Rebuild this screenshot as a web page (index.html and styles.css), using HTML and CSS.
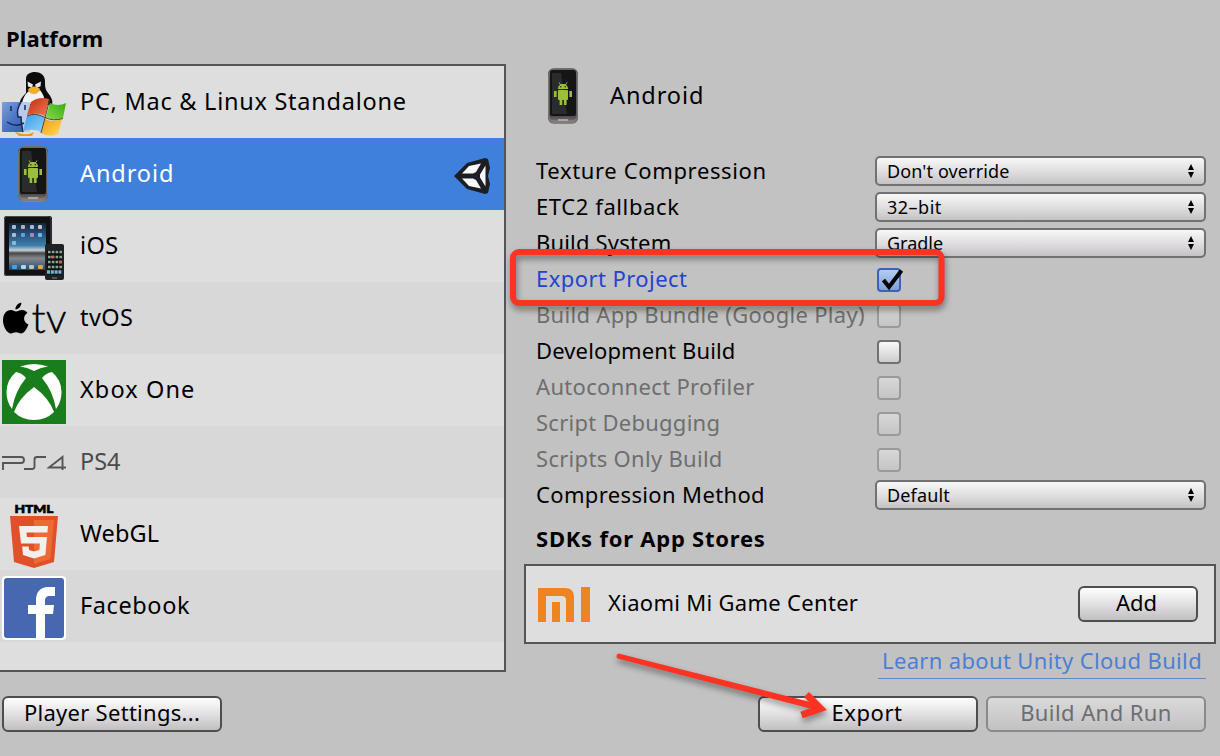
FILE: index.html
```html
<!DOCTYPE html>
<html lang="en">
<head>
<meta charset="utf-8">
<title>Build Settings</title>
<link rel="stylesheet" href="styles.css">
</head>
<body>
<svg class="defs" width="0" height="0" aria-hidden="true">
  <defs>
    <linearGradient id="gFace" x1="0" y1="0" x2="1" y2="1"><stop offset="0" stop-color="#7d9fdc"/><stop offset=".5" stop-color="#4a74c4"/><stop offset="1" stop-color="#2f57a8"/></linearGradient>
    <linearGradient id="gRed" x1="0" y1="0" x2="1" y2="1"><stop offset="0" stop-color="#c02e10"/><stop offset="1" stop-color="#f27a50"/></linearGradient>
    <linearGradient id="gGreen" x1="0" y1="1" x2="1" y2="0"><stop offset="0" stop-color="#86dc50"/><stop offset="1" stop-color="#38a80e"/></linearGradient>
    <linearGradient id="gBlue" x1="0" y1="0" x2="1" y2="1"><stop offset="0" stop-color="#3a9ae6"/><stop offset="1" stop-color="#8fd4fa"/></linearGradient>
    <linearGradient id="gYellow" x1="0" y1="0" x2="1" y2="1"><stop offset="0" stop-color="#f09a18"/><stop offset="1" stop-color="#ffdc58"/></linearGradient>
    <linearGradient id="gPhone" x1="0" y1="0" x2="0" y2="1"><stop offset="0" stop-color="#77716f"/><stop offset=".12" stop-color="#4a4848"/><stop offset=".85" stop-color="#4a4646"/><stop offset="1" stop-color="#8d8785"/></linearGradient>
    <linearGradient id="gPad" x1="0" y1="0" x2="0" y2="1"><stop offset="0" stop-color="#102440"/><stop offset=".48" stop-color="#3f7fae"/><stop offset=".58" stop-color="#c5d0d2"/><stop offset=".64" stop-color="#46464a"/><stop offset=".75" stop-color="#85888c"/><stop offset="1" stop-color="#26456a"/></linearGradient>
    <symbol id="phone" viewBox="0 0 64 64">
      <rect x="16" y="2" width="30" height="56" rx="6" fill="url(#gPhone)"/>
      <rect x="16.8" y="5" width="28.4" height="50" rx="5" fill="none" stroke="#8a8888" stroke-width="1"/>
      <rect x="18" y="4" width="26" height="46" rx="2.5" fill="#151516"/>
      <path d="M20 7h9l6 41H20z" fill="#2a2b2c"/>
      <path d="M26 54h10" stroke="#b8b8b8" stroke-width="1.5"/>
      <g fill="#9cbf3a">
        <path d="M26 23c0-3 2-5 5-5s5 2 5 5z"/>
        <rect x="26" y="24" width="10" height="10" rx="1"/>
        <rect x="22" y="25" width="2.6" height="6"/><rect x="37.4" y="25" width="2.6" height="6"/>
        <rect x="27.6" y="33" width="2.6" height="6"/><rect x="32" y="33" width="2.6" height="6"/>
        <path d="M27 16.5l2 3M35 16.5l-2 3" stroke="#9cbf3a" stroke-width="1"/>
      </g>
      <circle cx="28.8" cy="20.8" r=".8" fill="#222"/><circle cx="33.2" cy="20.8" r=".8" fill="#222"/>
    </symbol>
  </defs>
</svg>

<div class="window">
  <section class="platforms">
    <h2 class="title title-platform">Platform</h2>
    <ul class="list">
      <li class="row">
        <svg class="icon" viewBox="0 0 64 64">
          <path d="M24 7c0-5 4-7 9-7s10 3 10 9c0 5 0 8 3 12 4 5 5 8 4 12H18c-1-4 2-8 6-12z" fill="#0b0b0c"/>
          <path d="M27 19c3 2 8 2 11-1 3 4 5 8 5 14H20c1-6 3-10 7-13z" fill="#f1f1f3"/>
          <path d="M25.500 9.500 31 12.500l-1 3-4-1zM39 9.500 33 12.500l1 3 4.500-1z" fill="#e8e8e8"/>
          <path d="M26 18c1-4 9-5 12-1-1 4-4 5-6 5s-5-1-6-4z" fill="#efae27"/>
          <path d="M12 59q12 6 20 1l-2 4H17z" fill="#e99a20"/>
          <rect y="30" width="28" height="30" rx="1" fill="url(#gFace)"/>
          <path d="M19 30c-4 6-4 11-3 15h3c0 6 1 10 2 15h7V30z" fill="#b9caea"/>
          <path d="M19 30c-4 6-4 11-3 15h3c0 6 1 10 2 15M9 34v5M23 33v5M5 50q9 6 17 1" fill="none" stroke="#182957" stroke-width="1.500"/>
          <path d="M29 30q8-6 18-3l-4 17q-8-4-18-1z" fill="url(#gRed)"/>
          <path d="M48 31q8 4 16 0l-3 15q-8 4-17-1z" fill="url(#gGreen)"/>
          <path d="M25 44q8-4 18 1l-4 15q-8-4-18-1z" fill="url(#gBlue)"/>
          <path d="M43 47q8 4 17 0l-4 15q-8 4-17-1z" fill="url(#gYellow)"/>
          <path d="M47.500 28 43 46l-4 15M25 44q8-4 18 1.500 8 4 18 1" fill="none" stroke="#54452f" stroke-width="1"/>
        </svg>
        <span class="name n-pc">PC, Mac &amp; Linux Standalone</span>
      </li>
      <li class="row selected">
        <svg class="icon"><use href="#phone"/></svg>
        <span class="name n-android">Android</span>
        <svg class="unity" viewBox="0 0 38 38">
          <path d="M1 19 14 6 32 1l3 1 2 9-2 8 2 8-2 9-3 1-18-5z" fill="#1b1f24"/>
          <path d="M9 16.500 16 9l12-2.500-5 8.500-3 1.500zM9 21.500h11l3 1.500 5 8.500-12-2.500zM27 17.500l5.500-9v21L27 20.500z" fill="#f8f8f8"/>
        </svg>
      </li>
      <li class="row">
        <svg class="icon" viewBox="0 0 64 64">
          <rect x="2" width="48" height="60" rx="2.500" fill="#111114"/>
          <rect x="2.500" y=".5" width="46.500" height="59" rx="2.500" fill="none" stroke="#47484c"/>
          <rect x="7" y="7" width="37" height="47" fill="url(#gPad)"/>
          <g fill="#a9bccc"><rect x="10" y="9" width="4" height="4" rx="1"/><rect x="19" y="9" width="4" height="4" rx="1" fill="#c8ad9b"/><rect x="28" y="9" width="4" height="4" rx="1"/><rect x="36" y="9" width="4" height="4" rx="1" fill="#d0c3a3"/><rect x="10" y="17" width="4" height="4" rx="1"/><rect x="19" y="17" width="4" height="4" rx="1" fill="#5aa3d8"/><rect x="28" y="17" width="4" height="4" rx="1" fill="#a686b9"/><rect x="36" y="17" width="4" height="4" rx="1" fill="#68bde8"/><rect x="10" y="25" width="4" height="4" rx="1" fill="#8fb6cf"/></g>
          <g><rect x="10" y="49" width="5" height="4" rx="1" fill="#35a6ed"/><rect x="19" y="49" width="5" height="4" rx="1" fill="#9edcf4"/><rect x="27" y="49" width="5" height="4" rx="1" fill="#b8c4ac"/><rect x="36" y="49" width="5" height="4" rx="1" fill="#eda03b"/></g>
          <rect x="43" y="28" width="19" height="36" rx="2" fill="#202124"/>
          <rect x="45" y="34" width="15" height="25" fill="#111"/>
          <path d="M46 36h14M46 41h14M46 46h14M46 51h14" stroke="#87a796" stroke-width="2.600" stroke-dasharray="2.600 1.200"/>
          <path d="M49 41h3M57 46h3" stroke="#c86453" stroke-width="2.600"/>
          <path d="M45 56h15" stroke="#6eb6d8" stroke-width="3.500" stroke-dasharray="3 .8"/>
          <path d="M50 62h5" stroke="#888"/>
        </svg>
        <span class="name n-ios">iOS</span>
      </li>
      <li class="row">
        <svg class="icon" viewBox="0 0 64 64">
          <path d="M14 23.500c2 0 3-1.500 6-1.500 2.500 0 4.300 1.300 5.400 3-5 3-4 9.500 1 11.500-1.200 4-4.300 9-7.400 9-2 0-2.600-1.200-5-1.200s-3.200 1.200-5 1.200C5 45.500 1 38.500 1 32.500 1 26 4.500 22 9 22c2.200 0 3.600 1.500 5 1.500z" fill="#000"/>
          <path d="M13.500 21.500c-.3-3 2-6.200 5.800-7 .3 3.300-2.300 6.800-5.800 7z" fill="#000"/>
          <text class="tv" x="29.500" y="45" textLength="35" lengthAdjust="spacingAndGlyphs">tv</text>
        </svg>
        <span class="name n-tvos">tvOS</span>
      </li>
      <li class="row">
        <svg class="icon" viewBox="0 0 64 64">
          <rect width="64" height="64" fill="#1a7d1c"/>
          <g fill="#fff">
            <path d="M14 12Q20 13 24 18 13 31 10 49 4.500 42 4.500 32 4.500 20 14 12z"/>
            <path d="M50 12Q44 13 40 18 51 31 54 49 59.500 42 59.500 32 59.500 20 50 12z"/>
            <path d="M32 27Q47 38 52 52 44 60 32 60 20 60 12 52 17 38 32 27z"/>
            <path d="M18 6.500Q32 1.500 46 6.500 39 7 32 11 25 7 18 6.500z"/>
          </g>
        </svg>
        <span class="name n-xbox">Xbox One</span>
      </li>
      <li class="row">
        <svg class="icon" viewBox="0 0 64 64" fill="none" stroke="#555" stroke-width="1.900">
          <path d="M0 25h19q3 0 3 3t-3 3H1v7M22 37h8q2.500 0 2.500-2.500v-7Q32.500 25 35 25h9"/>
          <path d="M64 35.500H47L60.500 25v13"/>
        </svg>
        <span class="name n-ps4 dim">PS4</span>
      </li>
      <li class="row">
        <svg class="icon" viewBox="0 0 64 64">
          <text class="html" x="12.500" y="8.800" textLength="39" lengthAdjust="spacingAndGlyphs">HTML</text>
          <path d="M8 12h48l-4 46-20 6-20-6z" fill="#e0502b"/>
          <path d="M32 16h20l-3.600 39L32 60z" fill="#ee6a35"/>
          <path d="M17 22h29l-.6 6.500H24.500l.4 4.500H45l-1.600 18L32 54.500l-11-3.500-.8-8.500h6.500l.4 3.500 5 1.500 5.300-1.500.5-6.500H19z" fill="#f4efed"/>
        </svg>
        <span class="name n-webgl">WebGL</span>
      </li>
      <li class="row">
        <svg class="icon" viewBox="0 0 64 64">
          <rect width="64" height="64" rx="4" fill="#fff"/>
          <rect x="2" y="2" width="60" height="60" rx="3" fill="#4568b0"/>
          <path d="M34 62V38h-8v-9h8v-5c0-8 4.500-13 12-13h7v9h-5c-3.500 0-5 1.500-5 5v4h9l-1 9h-8v24z" fill="#fff"/>
        </svg>
        <span class="name n-facebook">Facebook</span>
      </li>
    </ul>
  </section>

  <section class="details">
    <header class="heading">
      <svg class="icon"><use href="#phone"/></svg>
      <span class="name n-android">Android</span>
    </header>
    <div class="settings">
      <span class="label l-texture">Texture Compression</span>
      <div class="popup"><span class="p-dont">Don't override</span><svg class="arrows" viewBox="0 0 8 14"><path d="M4 0 7 6H1zM4 14 1 8h6z"/></svg></div>
      <span class="label l-etc">ETC2 fallback</span>
      <div class="popup"><span class="p-bit">32–bit</span><svg class="arrows" viewBox="0 0 8 14"><path d="M4 0 7 6H1zM4 14 1 8h6z"/></svg></div>
      <span class="label l-system">Build System</span>
      <div class="popup"><span class="p-gradle">Gradle</span><svg class="arrows" viewBox="0 0 8 14"><path d="M4 0 7 6H1zM4 14 1 8h6z"/></svg></div>
      <span class="label l-export active">Export Project</span>
      <div class="check checked"><svg class="tick" viewBox="0 0 24 24"><path d="M5.500 12l5.500 7L23.500 2.500" fill="none" stroke="#000" stroke-width="4"/></svg></div>
      <span class="label l-bundle dim">Build App Bundle (Google Play)</span>
      <div class="check off"></div>
      <span class="label l-dev">Development Build</span>
      <div class="check"></div>
      <span class="label l-auto dim">Autoconnect Profiler</span>
      <div class="check off"></div>
      <span class="label l-debug dim">Script Debugging</span>
      <div class="check off"></div>
      <span class="label l-scripts dim">Scripts Only Build</span>
      <div class="check off"></div>
      <span class="label l-method">Compression Method</span>
      <div class="popup"><span class="p-default">Default</span><svg class="arrows" viewBox="0 0 8 14"><path d="M4 0 7 6H1zM4 14 1 8h6z"/></svg></div>
    </div>
    <h2 class="title title-sdk">SDKs for App Stores</h2>
    <div class="sdk">
      <svg class="mi" viewBox="0 0 52 35" fill="#ee8322"><path d="M0 1h27q9 0 9 9v25h-8V13q0-4-4-4H8v26H0zM14 15h8v20h-8zM43 0h9v35h-9z"/></svg>
      <span class="label l-xiaomi">Xiaomi Mi Game Center</span>
      <button class="button add"><span class="b-add">Add</span></button>
    </div>
    <a class="link"><span class="l-learn">Learn about Unity Cloud Build</span></a>
  </section>

  <footer class="footer">
    <button class="button player"><span class="b-player">Player Settings...</span></button>
    <button class="button export"><span class="b-export">Export</span></button>
    <button class="button disabled"><span class="b-run">Build And Run</span></button>
  </footer>

  <svg class="notes" viewBox="0 0 1220 756" fill="#fa3323" stroke="#fa3323">
    <rect x="513" y="252" width="428.500" height="51" rx="6" fill="none" stroke-width="6"/>
    <path d="M618.500 653.500 816 703.500v6.500L617.500 658.500Q615 655 618.500 653.500z" stroke="none"/>
    <path d="M806.500 694.500 820.500 708.500 801.500 715" fill="none" stroke-width="7" stroke-linejoin="miter"/>
  </svg>
</div>
</body>
</html>
```

FILE: styles.css
```css
* { box-sizing: border-box; }

body {
  margin: 0;
  background: #c2c2c2;
  color: #000;
  font-family: "Noto Sans", "Open Sans", sans-serif;
  font-size: 22px;
}

.defs { position: absolute; }

.window {
  position: relative;
  width: 1220px;
  height: 756px;
  overflow: hidden;
  display: grid;
  grid-template-columns: 506px 1fr;
  grid-template-rows: 684px 1fr;
  column-gap: 18px;
  white-space: nowrap;
}

.title {
  margin: 0;
  font-size: 22px;
  font-weight: 700;
  line-height: 30px;
}
.title-platform { padding: 23px 0 11px 6px; letter-spacing: .1px; }

.list {
  margin: 0;
  padding: 0;
  list-style: none;
  height: 608px;
  border: 2px solid #555;
  border-left: 0;
  background: #dedede;
}
.row {
  display: flex;
  align-items: center;
  height: 72px;
  padding-left: 2px;
}
.row:nth-child(even) { background: #d8d8d8; }
.row.selected { background: #4080dd; color: #fff; }

.icon {
  display: block;
  flex: none;
  width: 64px;
  height: 64px;
  margin-top: 4px;
  overflow: visible;
}
.name { margin: -2px 0 0 14px; font-size: 23.500px; line-height: 34px; }
.unity { width: 38px; height: 38px; margin-left: auto; margin-right: 13px; margin-top: 4px; }
.tv { font: 300 41px Lato, sans-serif; stroke: #000; stroke-width: .4px; }
.html { font: 900 11px Lato, sans-serif; stroke: #000; stroke-width: .6px; }
.dim { color: #6e6e6e; }
.name.dim { color: #4a4a4a; }

/* per-string tracking */
.n-pc { letter-spacing: .74px; }
.n-android { letter-spacing: .9px; }
.n-ios { letter-spacing: .4px; }
.n-tvos { letter-spacing: .4px; }
.n-xbox { letter-spacing: 1.1px; }
.n-webgl { letter-spacing: .15px; }
.n-facebook { letter-spacing: .6px; }
.l-texture { letter-spacing: .64px; }
.l-etc { letter-spacing: .6px; }
.l-system { letter-spacing: .18px; }
.l-export { letter-spacing: .44px; }
.l-bundle { letter-spacing: .3px; }
.l-dev { letter-spacing: .14px; }
.l-auto { letter-spacing: .32px; }
.l-debug { letter-spacing: .26px; }
.l-scripts { letter-spacing: .3px; }
.l-method { letter-spacing: .36px; }
.l-xiaomi { letter-spacing: .3px; }
.l-learn { letter-spacing: .35px; }
.p-dont { letter-spacing: .12px; }
.p-bit { letter-spacing: .5px; }
.p-default { letter-spacing: .15px; }
.b-player { letter-spacing: .28px; }
.b-export { letter-spacing: .55px; }
.b-run { letter-spacing: .42px; }

.heading { display: flex; height: 154px; padding: 62px 0 0 8px; }
.heading .name { margin-top: 16px; }

.settings {
  display: grid;
  grid-template-columns: 339px 331px;
  grid-auto-rows: 36px;
  align-items: center;
  padding-left: 12px;
}
.label { line-height: 30px; margin-top: -4px; }
.active { color: #2145cf; }

.popup {
  display: flex;
  align-items: center;
  justify-content: space-between;
  height: 30px;
  margin-top: -2px;
  padding: 0 9px 0 10px;
  border: 2px solid #717171;
  border-radius: 5px;
  background: linear-gradient(#f8f8f8, #dedcde 55%, #c4c2c4);
  font-size: 18px;
}
.arrows { width: 8px; height: 14px; }

.check {
  width: 24px;
  height: 24px;
  margin-left: 2px;
  border: 2px solid #717171;
  border-radius: 4px;
  background: linear-gradient(#fafafa, #cecbce);
}
.check.off { border-color: #9a9a9a; background: linear-gradient(#d8d8d8, #c6c4c6); }
.check.checked { border-color: #3f5fc4; background: linear-gradient(#b4ccf0, #7e9fd8); }
.tick { display: block; width: 24px; height: 24px; margin: -2px 0 0 -1px; overflow: visible; }

.title-sdk { padding: 9px 0 11px 12px; letter-spacing: .76px; }

.sdk {
  display: flex;
  align-items: center;
  width: 692px;
  height: 80px;
  padding: 0 16px 0 12px;
  border: 2px solid #555;
  background: #dedede;
}
.mi { width: 52px; height: 35px; margin-right: 18px; }

.button {
  width: 220px;
  height: 36px;
  padding: 0 2px 0 0;
  border: 2px solid #4e4e4e;
  border-radius: 6px;
  background: linear-gradient(#fff, #e2e0e2 50%, #c1bfc1);
  color: #000;
  font: inherit;
  line-height: 30px;
}
.button span { display: block; margin-top: -4px; }
.button.add { width: 120px; margin-left: auto; padding-right: 3px; }
.button.disabled { border-color: #8a8a8a; color: #6e6e6e; background: linear-gradient(#dadada, #cfcdcf 50%, #c2c0c2); }
.button.player, .button.disabled { padding-right: 0; }

.link {
  display: block;
  width: 328px;
  height: 35px;
  margin-left: 354px;
  padding-left: 4px;
  line-height: 32px;
  color: #4c7fd4;
  border-bottom: 1px solid #6688c0;
}

.footer {
  grid-column: 1 / -1;
  display: flex;
  gap: 8px;
  padding: 12px 14px 0 2px;
}
.export { margin-left: auto; }

.notes {
  position: absolute;
  inset: 0;
  width: 1220px;
  height: 756px;
  pointer-events: none;
  filter: drop-shadow(1px 4px 3px rgba(0, 0, 0, .42));
}
```
